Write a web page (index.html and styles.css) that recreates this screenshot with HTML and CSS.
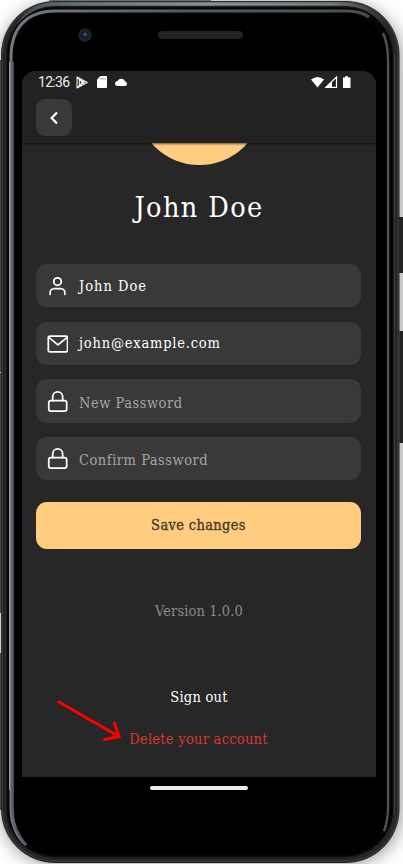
FILE: index.html
```html
<!DOCTYPE html>
<html lang="en">
<head>
<meta charset="utf-8">
<title>Profile</title>
<link rel="stylesheet" href="styles.css">
</head>
<body>
<div class="device">
  <svg class="frame" viewBox="0 0 403 864" aria-hidden="true">
    <defs>
      <linearGradient id="rim" x1="0" y1="0" x2="1" y2="0">
        <stop offset="0" stop-color="#42464a"/><stop offset=".15" stop-color="#697074"/><stop offset=".5" stop-color="#899092"/><stop offset=".85" stop-color="#747a7c"/><stop offset="1" stop-color="#292929"/>
      </linearGradient>
      <linearGradient id="edge" x1="0" y1="0" x2="1" y2="0">
        <stop offset="0" stop-color="#747980"/><stop offset=".5" stop-color="#555a62"/><stop offset="1" stop-color="#4c4d51"/>
      </linearGradient>
      <filter id="soft" x="-10%" y="-10%" width="120%" height="120%"><feGaussianBlur stdDeviation="9"/></filter>
    </defs>
    <rect x="2" y="5" width="399" height="859" rx="54" fill="#777" opacity=".8" filter="url(#soft)"/>
    <path d="M0 60V372M0 373V613M0 653V810" stroke="#464646" stroke-width="2"/>
    <path d="M49 .5H211" stroke="#6e6e6e"/>
    <path d="M211 .5H351" stroke="#c6ccc8"/>
    <path d="M398 217h5v56h-5zM398 331h5v112h-5z" fill="#232323"/>
    <path d="M399.5 331v112" stroke="#454545"/>
    <rect x="1" y="1" width="398.500" height="862" rx="54" fill="#252525"/>
    <rect x="2.500" y="2.500" width="395.500" height="858.500" rx="52" fill="none" stroke="#393939" stroke-width="1.500"/>
    <path d="M18 25C28 9 40 4 57 4H342C363 4 377 12 386 27" fill="none" stroke="url(#rim)" stroke-width="3.500"/>
    <rect x="6.500" y="7" width="386.500" height="850" rx="48" fill="#060606" stroke="#141414"/>
    <path d="M26 845C16 836 11 825 11 807V57C11 28 27 11 55 11H346Q361 11 369 17" fill="none" stroke="url(#edge)" stroke-width="3"/>
    <path d="M9.500 790V62" stroke="#9b9c9d"/>
    <path d="M12.500 62V806Q12.500 829 26 845" fill="none" stroke="#575d68" stroke-width="2.500"/>
    <path d="M383 33Q388 43 388 62V804Q388 821 384 831" fill="none" stroke="#505155" stroke-width="2.500"/>
    <path d="M391.500 54V815" stroke="#000" stroke-width="2"/>
    <path d="M394.500 54V815" stroke="#363636" stroke-width="1.500"/>
    <path d="M3.500 54V812M6.500 54V812" stroke="#1b1b1b"/>
    <rect x="14" y="13" width="372.500" height="842" rx="43" fill="#000"/>
    <circle cx="85" cy="35" r="6.700" fill="#202124"/><circle cx="85" cy="35" r="4" fill="#151a2c"/><circle cx="85" cy="34.500" r="2.300" fill="#2c3768"/><circle cx="85.500" cy="34" r=".8" fill="#6071a8"/>
    <rect x="158" y="31" width="85" height="8" rx="4" fill="#202222"/>
    <path d="M161 33.500H240M162 36.500H240" stroke="#2c3030" stroke-dasharray="1 1"/>
  </svg>

  <main class="screen">
    <header class="header">
      <div class="status">
        <span class="clock">12:36</span>
        <svg class="play" viewBox="0 0 12 13"><path d="M1 1v11l10.300-5.500zM1 1l7 7.200M1 12l7-7.200M3.300 3.500v6l5-3z" fill="none" stroke="#eee" stroke-width="1.100" stroke-linejoin="round"/></svg>
        <svg class="sd" viewBox="0 0 10 12"><path d="M3.500 0H9q1 0 1 1v10q0 1-1 1H1q-1 0-1-1V3.500z" fill="#fff"/><path d="M4 2v1.500M6 2v1.500M8 2v1.500" stroke="#777"/></svg>
        <svg class="cloud" viewBox="0 0 13 9"><path d="M2.600 8a2.500 2.500 0 0 1 0-5 4.200 4.200 0 0 1 7.600.6 2.300 2.300 0 0 1 .3 4.400z" fill="#fff"/></svg>
        <svg class="signals" viewBox="0 0 40 13"><path d="M0 3.500Q6.500-1.700 13 3.500L6.500 11.500z" fill="#fff"/><path d="M15 11.300L25.500 1v10.300z" fill="none" stroke="#fff" stroke-width="1.200"/><path d="M15 11.500l6-6v6z" fill="#fff"/><path d="M32 1.500h2V.3h3v1.200h2.500V12H32z" fill="#fff"/></svg>
      </div>
      <button class="back" aria-label="Back"><svg viewBox="0 0 10 14"><path d="M8 1.500L2.600 7 8 12.500" fill="none" stroke="#fff" stroke-width="2.200"/></svg></button>
    </header>

    <section class="content">
      <div class="avatar-window"><div class="avatar"></div></div>
      <h1 class="name"><span>John Doe</span></h1>
      <form class="form">
        <div class="field">
          <svg viewBox="0 0 24 24"><circle cx="12" cy="7.500" r="4.300"/><path d="M3.600 22V20A4.500 4.500 0 0 1 8 15.500h8a4.500 4.500 0 0 1 4.400 4.500v2"/></svg>
          <span class="t-user">John Doe</span>
        </div>
        <div class="field">
          <svg viewBox="0 0 24 24"><rect x="1.500" y="3.500" width="22" height="18" rx="2"/><path d="M2 5l10.500 8.500L23 5"/></svg>
          <span class="t-mail">john@example.com</span>
        </div>
        <div class="field hint">
          <svg viewBox="0 0 24 24"><rect x="2" y="11" width="20.500" height="12" rx="2.500"/><path d="M6.500 11V6.800a5.700 5.700 0 0 1 11.400 0V11"/></svg>
          <span class="t-new">New Password</span>
        </div>
        <div class="field hint">
          <svg viewBox="0 0 24 24"><rect x="2" y="11" width="20.500" height="12" rx="2.500"/><path d="M6.500 11V6.800a5.700 5.700 0 0 1 11.400 0V11"/></svg>
          <span class="t-confirm">Confirm Password</span>
        </div>
        <button class="save" type="button"><span>Save changes</span></button>
      </form>
      <p class="version"><span>Version 1.0.0</span></p>
      <p class="signout"><span>Sign out</span></p>
      <p class="delete"><span>Delete your account</span></p>
    </section>
  </main>
  <div class="homebar"></div>
  <svg class="arrow" viewBox="0 0 70 50"><path d="M4 6L64 40.500M59.500 27L64 40.500L49.500 43.500" fill="none" stroke="#f00" stroke-width="3" stroke-linecap="round"/></svg>
</div>
</body>
</html>
```
FILE: styles.css
```css
* { box-sizing: border-box; }
body { margin: 0; background: #fff; font-family: "Roboto Slab", "DejaVu Serif Condensed", "DejaVu Serif", serif; font-stretch: condensed; }
button { border: 0; padding: 0; font: inherit; }
.device { position: relative; width: 403px; height: 864px; padding: 71px 27px 0 22px; overflow: hidden; }
.frame { position: absolute; inset: 0; width: 403px; height: 864px; }
.screen { position: relative; height: 706px; overflow: hidden; border-radius: 14px 14px 0 0; background: #272727; }
.header { position: relative; z-index: 1; height: 72px; background: #222; box-shadow: 0 1px 2px #0009; padding: 0 14px; }
.status { display: flex; align-items: center; height: 22px; padding-left: 2px; }
.clock { width: 38px; color: #eee; font: 14px/22px Roboto, sans-serif; letter-spacing: -.7px; white-space: nowrap; }
.play { width: 12px; height: 13px; }
.sd { width: 10px; height: 12px; margin-left: 9px; }
.cloud { width: 13px; height: 9px; margin-left: 8px; }
.signals { width: 40px; height: 13px; margin-left: auto; margin-right: 11px; }
.back { display: flex; align-items: center; justify-content: center; width: 36px; height: 37px; margin-top: 6px; border-radius: 9px; background: #393939; }
.back svg { width: 10px; height: 14px; }
.avatar-window { height: 22px; overflow: hidden; display: flex; align-items: flex-end; justify-content: center; }
.avatar { flex: none; width: 127px; height: 127px; border-radius: 50%; background: #ffcc80; }
.name { display: flex; justify-content: center; height: 84px; margin: 0 0 15px; color: #fff; font-size: 28.500px; line-height: 86px; font-weight: 400; letter-spacing: 1.400px; white-space: nowrap; }
.form { display: grid; gap: 14.400px; padding: 0 15px 0 14px; }
.field { display: flex; align-items: center; gap: 11px; height: 43.300px; padding-left: 11px; border-radius: 11px; background: #393939; color: #fff; font-size: 14.500px; line-height: 20px; white-space: nowrap; }
.field svg { flex: none; width: 21px; height: 21px; fill: none; stroke: #fff; stroke-width: 2; stroke-linecap: round; stroke-linejoin: round; }
.t-user { letter-spacing: 1px; }
.t-mail { letter-spacing: .8px; }
.hint { color: #a5a5a5; letter-spacing: .52px; }
.hint span { padding-top: 3px; }
.save { height: 47px; margin-top: 7px; border-radius: 11px; background: #ffcc80; color: #493b26; font-size: 14.500px; font-weight: 400; letter-spacing: .35px; -webkit-text-stroke: .35px #493b26; }
.version, .signout, .delete { height: 24px; margin: 0; text-align: center; font-size: 14.500px; line-height: 24px; white-space: nowrap; }
.version { margin-top: 50px; color: #8b8b8b; letter-spacing: .1px; }
.signout { margin-top: 62px; color: #fff; letter-spacing: .25px; }
.delete { margin-top: 18px; padding-right: 1px; color: #db3834; letter-spacing: .27px; }
.homebar { position: relative; width: 98px; height: 4px; margin: 9px 0 0 128px; border-radius: 2px; background: #e9ecec; }
.arrow { position: absolute; left: 55px; top: 696px; width: 70px; height: 50px; }
```
